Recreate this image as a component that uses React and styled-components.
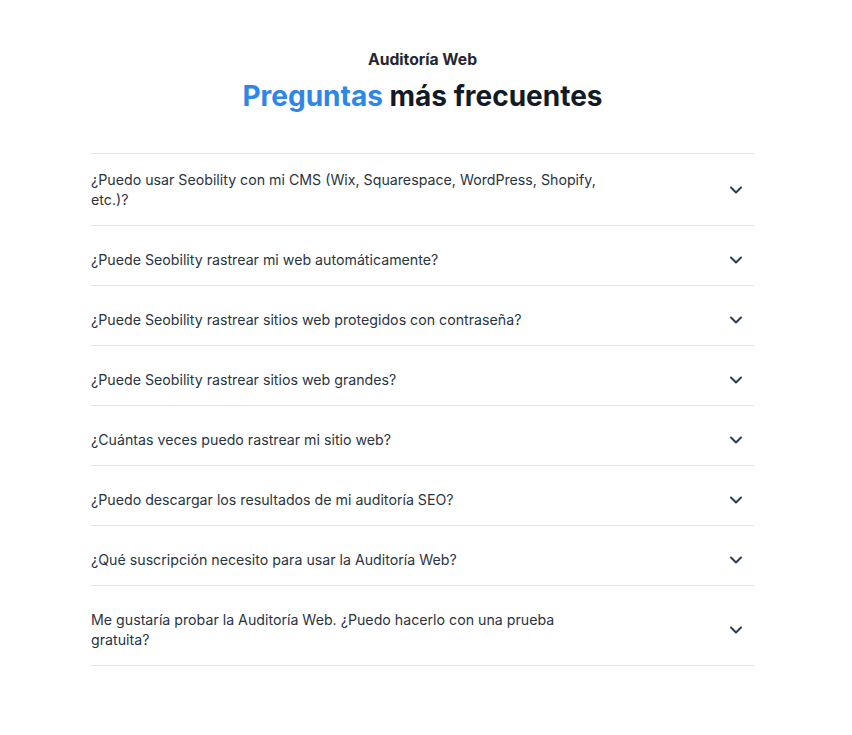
import styled, { createGlobalStyle } from 'styled-components';
import { ChevronDown } from 'lucide-react';

const GlobalStyle = createGlobalStyle`
  html, body {
    margin: 0;
    padding: 0;
    background: #ffffff;
  }
  body {
    font-family: "Inter", "Liberation Sans", sans-serif;
    -webkit-font-smoothing: antialiased;
  }
`;

const Section = styled.section`
  padding: 50px 98px 60px 91px;
`;

const Header = styled.header`
  display: flex;
  flex-direction: column;
  align-items: center;
  gap: 8px;
  margin-bottom: 39px;
`;

const Eyebrow = styled.span`
  font-size: 15.7px;
  line-height: 20px;
  font-weight: 700;
  color: #1f2733;
`;

const Title = styled.h2`
  margin: 0;
  font-size: 28px;
  line-height: 36px;
  font-weight: 700;
  color: #121a26;
`;

const Accent = styled.span`
  color: #2e86ea;
`;

const List = styled.ul`
  list-style: none;
  margin: 0;
  padding: 0;
  border-top: 1px solid #dce8f6;
`;

const Item = styled.li`
  border-bottom: 1px solid #dce8f6;
`;

const Question = styled.button`
  display: flex;
  width: 100%;
  align-items: center;
  justify-content: space-between;
  gap: 24px;
  padding: ${({ $first }) => ($first ? '16px' : '24px')} 8px 15px 0;
  border: none;
  background: none;
  cursor: pointer;
  text-align: left;
  font-family: inherit;
`;

const Label = styled.span`
  max-width: 515px;
  font-size: 14.2px;
  line-height: 20px;
  color: #2a3442;
`;

const Chevron = styled(ChevronDown).attrs({
  size: 20,
  strokeWidth: 2.4,
})`
  flex-shrink: 0;
  color: #2c3d52;
`;

const QUESTIONS = [
  '¿Puedo usar Seobility con mi CMS (Wix, Squarespace, WordPress, Shopify, etc.)?',
  '¿Puede Seobility rastrear mi web automáticamente?',
  '¿Puede Seobility rastrear sitios web protegidos con contraseña?',
  '¿Puede Seobility rastrear sitios web grandes?',
  '¿Cuántas veces puedo rastrear mi sitio web?',
  '¿Puedo descargar los resultados de mi auditoría SEO?',
  '¿Qué suscripción necesito para usar la Auditoría Web?',
  'Me gustaría probar la Auditoría Web. ¿Puedo hacerlo con una prueba gratuita?',
];

export default function App() {
  return (
    <>
      <GlobalStyle />
      <Section>
        <Header>
          <Eyebrow>Auditoría Web</Eyebrow>
          <Title>
            <Accent>Preguntas</Accent> más frecuentes
          </Title>
        </Header>
        <List>
          {QUESTIONS.map((q, i) => (
            <Item key={q}>
              <Question $first={i === 0}>
                <Label>{q}</Label>
                <Chevron />
              </Question>
            </Item>
          ))}
        </List>
      </Section>
    </>
  );
}
